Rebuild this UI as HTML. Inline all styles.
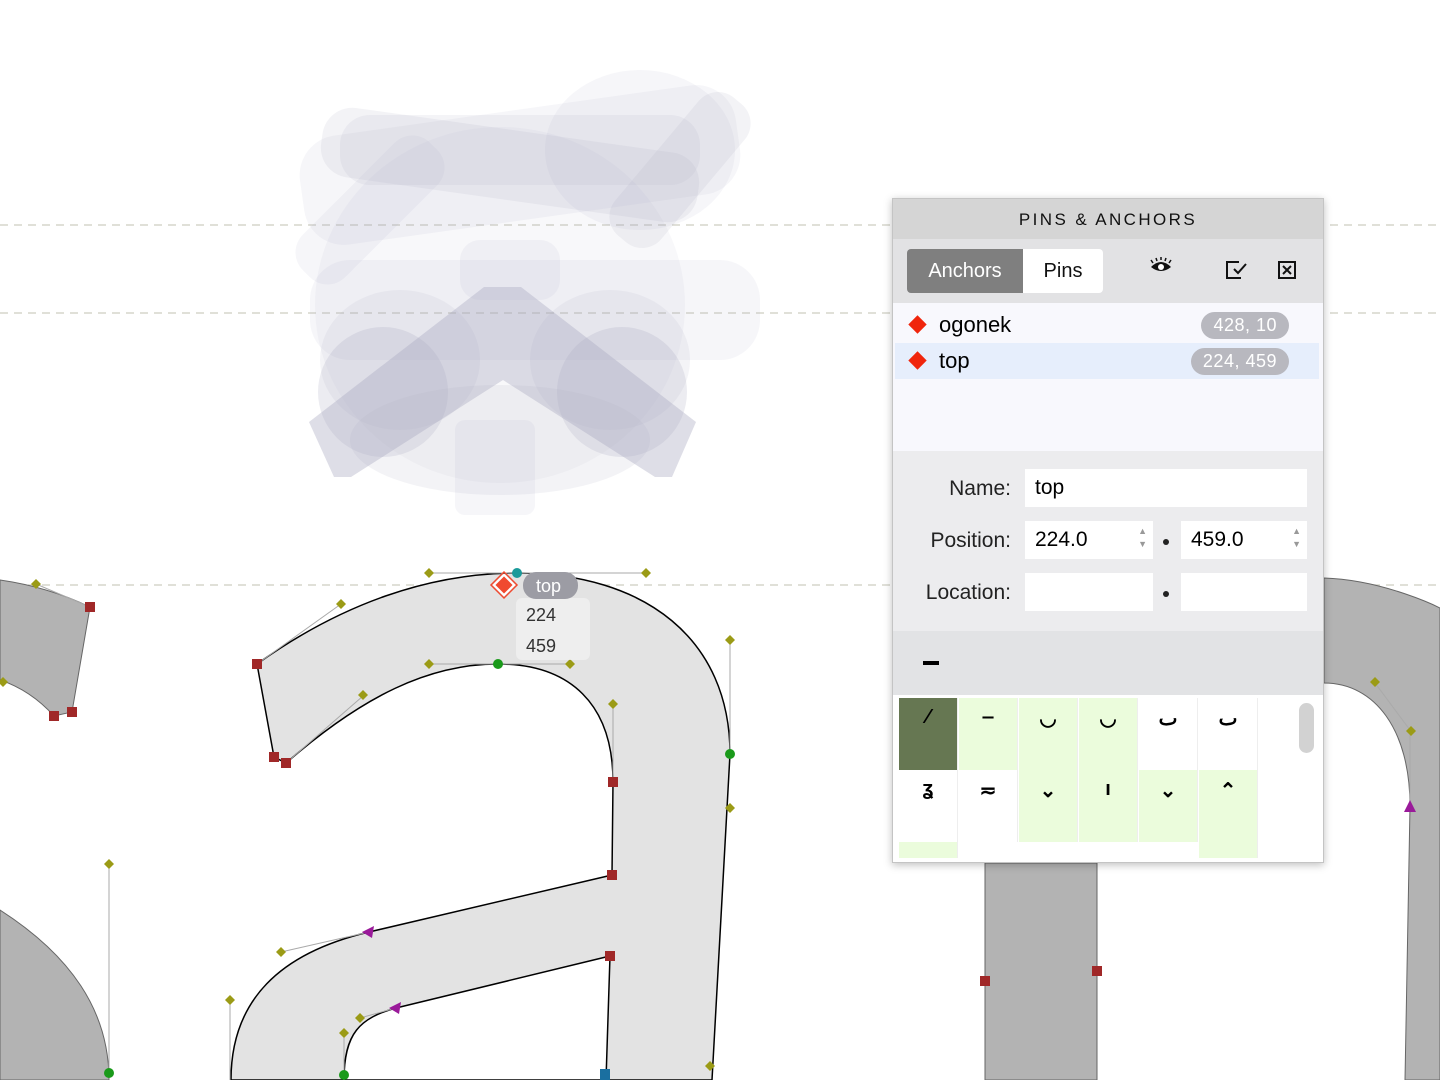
<!DOCTYPE html>
<html><head><meta charset="utf-8"><style>
*{margin:0;padding:0;box-sizing:border-box}
body{width:1440px;height:1080px;overflow:hidden;background:#fff;font-family:"Liberation Sans",sans-serif;position:relative}
svg.bg{position:absolute;left:0;top:0}
.panel{position:absolute;left:892px;top:198px;width:432px;height:665px;background:#fff;border:1px solid #c4c4c4;box-shadow:0 2px 8px rgba(0,0,0,.25);overflow:hidden}
.hdr{height:40px;background:#d5d5d5;text-align:center;line-height:42px;font-size:17px;letter-spacing:2.4px;color:#111}
.tabs{height:64px;background:#e2e2e4;position:relative}
.seg{position:absolute;left:14px;top:10px;height:44px;width:196px;border-radius:4px;overflow:hidden;display:flex;font-size:20px}
.seg div{line-height:44px;text-align:center}
.list{height:148px;background:#f8f8fd;position:relative}
.row{position:absolute;left:2px;width:424px;height:36px;font-size:22px;line-height:36px}
.dia{position:absolute;left:16px;top:11px;width:13px;height:13px;background:#f0250c;transform:rotate(45deg)}
.row .t{position:absolute;left:44px}
.pill{position:absolute;right:30px;top:5px;height:27px;line-height:27px;border-radius:14px;background:#b8b8bf;color:#fff;font-size:18px;padding:0 12px;letter-spacing:.5px}
.form{height:180px;background:#ececee;position:relative;font-size:21px}
.lbl{position:absolute;right:312px;color:#222}
.inp{position:absolute;background:#fff;height:38px;line-height:38px;padding-left:10px;font-size:21px}
.dot{position:absolute;left:270px;width:6px;height:6px;border-radius:3px;background:#222}
.bar{height:64px;background:#e2e3e5;position:relative}
.grid{position:absolute;left:6px;width:360px;height:160px;overflow:hidden}
.c{position:absolute;width:59px;height:72px;border-right:1px solid #eee;text-align:center;font-size:20px;font-weight:bold;padding-top:8px}
</style></head><body>
<svg class="bg" width="1440" height="1080">
<g stroke="#d6d6cc" stroke-dasharray="8,6" stroke-width="1.5">
<line x1="0" y1="225" x2="1440" y2="225"/><line x1="0" y1="313" x2="1440" y2="313"/><line x1="0" y1="585" x2="1440" y2="585"/>
</g>
<g fill="#a8a8c0">
<ellipse cx="500" cy="305" rx="185" ry="178" opacity=".08"/>
<ellipse cx="640" cy="150" rx="95" ry="80" opacity=".1"/>
<rect x="300" y="110" width="440" height="110" rx="40" opacity=".1" transform="rotate(-8 520 165)"/>
<rect x="320" y="130" width="380" height="70" rx="30" opacity=".14" transform="rotate(8 510 165)"/>
<rect x="340" y="115" width="360" height="70" rx="30" opacity=".12"/>
<rect x="590" y="140" width="180" height="60" rx="25" opacity=".14" transform="rotate(-50 680 170)"/>
<rect x="280" y="180" width="180" height="60" rx="25" opacity=".1" transform="rotate(-45 370 210)"/>
<rect x="310" y="260" width="450" height="100" rx="40" opacity=".1"/>
<ellipse cx="500" cy="440" rx="150" ry="55" opacity=".14"/>
<rect x="455" y="420" width="80" height="95" rx="10" opacity=".1"/>
<rect x="460" y="240" width="100" height="60" rx="20" opacity=".1"/>
<ellipse cx="383" cy="392" rx="65" ry="65" opacity=".22"/>
<ellipse cx="622" cy="392" rx="65" ry="65" opacity=".22"/>
<ellipse cx="400" cy="360" rx="80" ry="70" opacity=".12"/>
<ellipse cx="610" cy="360" rx="80" ry="70" opacity=".12"/>
<polygon points="334,477 309,422 484,287 521,287 696,422 672,477 655,477 503,380 351,477" opacity=".38"/>
</g>
<g fill="#b3b3b3" stroke="#666" stroke-width="1">
<path d="M0,580 C35,585 65,595 90,607 L72,712 L54,716 C35,695 15,685 0,680 Z"/>
<path d="M0,910 C70,955 109,1010 109,1080 L0,1080 Z"/>
</g>
<g fill="#b3b3b3" stroke="#666" stroke-width="1">
<path d="M985,863 L1097,863 L1097,1080 L985,1080 Z"/>
<path d="M1324,578 C1385,580 1440,608 1440,608 L1440,1080 L1405,1080 L1410,806 C1410,730 1375,683 1324,683 Z"/>
</g>
<path fill-rule="evenodd" fill="#e3e3e3" stroke="#000" stroke-width="1.5" d="M257,664 C341,604 429,573 517,573 C646,573 730,640 730,754 L712,1080 L231,1080 C231,1000 280,953 369,932 L612,875 L613,782 C613,704 570,664 498,664 C429,664 363,696 286,763 L274,757 Z M344,1080 C344,1033 360,1018 396,1008 L610,956 L606,1080 Z"/>
<g stroke="#aaa" stroke-width="1" fill="none">
<line x1="257" y1="664" x2="341" y2="604"/><line x1="429" y1="573" x2="646" y2="573"/><line x1="730" y1="640" x2="730" y2="754"/>
<line x1="429" y1="664" x2="570" y2="664"/><line x1="613" y1="704" x2="613" y2="782"/><line x1="286" y1="763" x2="363" y2="696"/>
<line x1="281" y1="952" x2="369" y2="932"/><line x1="230" y1="1000" x2="230" y2="1080"/><line x1="360" y1="1018" x2="396" y2="1008"/><line x1="344" y1="1033" x2="344" y2="1080"/>
<line x1="109" y1="864" x2="109" y2="1072"/><line x1="36" y1="584" x2="90" y2="607"/><line x1="1375" y1="683" x2="1410" y2="730"/><line x1="1410" y1="730" x2="1410" y2="806"/>
</g>
<g fill="#9b9b16">
<path d="M341,599l5,5-5,5-5-5z"/><path d="M429,568l5,5-5,5-5-5z"/><path d="M646,568l5,5-5,5-5-5z"/><path d="M730,635l5,5-5,5-5-5z"/><path d="M730,803l5,5-5,5-5-5z"/>
<path d="M429,659l5,5-5,5-5-5z"/><path d="M570,659l5,5-5,5-5-5z"/><path d="M613,699l5,5-5,5-5-5z"/><path d="M363,690l5,5-5,5-5-5z"/>
<path d="M281,947l5,5-5,5-5-5z"/><path d="M230,995l5,5-5,5-5-5z"/><path d="M360,1013l5,5-5,5-5-5z"/><path d="M344,1028l5,5-5,5-5-5z"/><path d="M710,1061l5,5-5,5-5-5z"/>
<path d="M109,859l5,5-5,5-5-5z"/><path d="M36,579l5,5-5,5-5-5z"/><path d="M3,677l5,5-5,5-5-5z"/><path d="M1375,677l5,5-5,5-5-5z"/><path d="M1411,726l5,5-5,5-5-5z"/>
</g>
<g fill="#a02828">
<rect x="252" y="659" width="10" height="10"/><rect x="269" y="752" width="10" height="10"/><rect x="281" y="758" width="10" height="10"/><rect x="608" y="777" width="10" height="10"/><rect x="607" y="870" width="10" height="10"/><rect x="605" y="951" width="10" height="10"/>
<rect x="85" y="602" width="10" height="10"/><rect x="67" y="707" width="10" height="10"/><rect x="49" y="711" width="10" height="10"/><rect x="980" y="976" width="10" height="10"/><rect x="1092" y="966" width="10" height="10"/>
</g>
<rect x="600" y="1069" width="10" height="11" fill="#1a6fa0"/>
<g fill="#1a9a1a"><circle cx="498" cy="664" r="5"/><circle cx="730" cy="754" r="5"/><circle cx="109" cy="1073" r="5"/><circle cx="344" cy="1075" r="5"/></g>
<circle cx="517" cy="573" r="5" fill="#1a9a9a"/>
<g fill="#9a1a9a"><path d="M362,932l12,-6,-2,12z"/><path d="M389,1008l12,-6,-2,12z"/><path d="M1410,800l6,12h-12z"/></g>
<path d="M504,575l10,10-10,10-10-10z" fill="#f04a30" stroke="#fff" stroke-width="2"/>
<path d="M504,572l13,13-13,13-13-13z" fill="none" stroke="#f04a30" stroke-width="1.5"/>
<rect x="516" y="598" width="74" height="62" rx="6" fill="#f0f0f0" opacity=".8"/>
<rect x="523" y="572" width="55" height="27" rx="13" fill="#9c9ca4"/>
<text x="536" y="592" font-size="18" fill="#fff" font-family="Liberation Sans">top</text>
<text x="526" y="621" font-size="18" fill="#333" font-family="Liberation Sans">224</text>
<text x="526" y="652" font-size="18" fill="#333" font-family="Liberation Sans">459</text>
</svg>
<div class="panel">
<div class="hdr">PINS &amp; ANCHORS</div>
<div class="tabs">
<div class="seg"><div style="width:116px;background:#7f7f7f;color:#fff">Anchors</div><div style="width:80px;background:#fff;color:#111">Pins</div></div>
<svg style="position:absolute;left:256px;top:18px" width="24" height="18"><path d="M2,10 Q12,0 22,10 Q12,18 2,10Z" fill="#111"/><circle cx="12" cy="10" r="3" fill="#fff"/><path d="M4,6l-2,-3M8,4l-1,-3M12,3v-3M16,4l1,-3M20,6l2,-3" stroke="#111" stroke-width="1.5"/></svg>
<svg style="position:absolute;left:332px;top:21px" width="24" height="20"><path d="M14,2H2V18H16" fill="none" stroke="#111" stroke-width="2"/><path d="M9,9l4,4 8,-9" fill="none" stroke="#111" stroke-width="2"/></svg>
<svg style="position:absolute;left:385px;top:22px" width="18" height="18"><rect x="1" y="1" width="16" height="16" fill="none" stroke="#111" stroke-width="2"/><path d="M5,5l8,8M13,5l-8,8" stroke="#111" stroke-width="2"/></svg>
</div>
<div class="list">
<div class="row" style="top:4px"><div class="dia"></div><span class="t">ogonek</span><span class="pill">428, 10</span></div>
<div class="row" style="top:40px;background:#e6eefc"><div class="dia"></div><span class="t">top</span><span class="pill">224, 459</span></div>
</div>
<div class="form">
<span class="lbl" style="top:26px">Name:</span><div class="inp" style="left:132px;top:18px;width:282px">top</div>
<span class="lbl" style="top:78px">Position:</span><div class="inp" style="left:132px;top:70px;width:128px">224.0<span style="position:absolute;right:6px;top:4px;font-size:9px;color:#999;line-height:13px">▲<br>▼</span></div>
<div class="dot" style="top:88px"></div><div class="inp" style="left:288px;top:70px;width:126px">459.0<span style="position:absolute;right:6px;top:4px;font-size:9px;color:#999;line-height:13px">▲<br>▼</span></div>
<span class="lbl" style="top:130px">Location:</span><div class="inp" style="left:132px;top:122px;width:128px"></div>
<div class="dot" style="top:140px"></div><div class="inp" style="left:288px;top:122px;width:126px"></div>
</div>
<div class="bar"><div style="position:absolute;left:30px;top:30px;width:16px;height:4px;background:#000"></div></div>
<div class="grid" style="top:499px;height:160px">
<div class="c" style="left:0;top:0;background:#667752;color:#000">⁄</div>
<div class="c" style="left:60px;top:0;background:#ebfcdc">‒</div>
<div class="c" style="left:120px;top:0;background:#ebfcdc">◡</div>
<div class="c" style="left:180px;top:0;background:#ebfcdc">◡</div>
<div class="c" style="left:240px;top:0;background:#fff">ٮ</div>
<div class="c" style="left:300px;top:0;background:#fff">ٮ</div>
<div class="c" style="left:0;top:72px;background:#fff">ʓ</div>
<div class="c" style="left:60px;top:72px;background:#fff">≂</div>
<div class="c" style="left:120px;top:72px;background:#ebfcdc">⌄</div>
<div class="c" style="left:180px;top:72px;background:#ebfcdc">ı</div>
<div class="c" style="left:240px;top:72px;background:#ebfcdc">⌄</div>
<div class="c" style="left:300px;top:72px;background:#ebfcdc">⌃</div>
<div class="c" style="left:0;top:144px;background:#ebfcdc"></div>
<div class="c" style="left:300px;top:144px;background:#ebfcdc"></div>
</div>
<div style="position:absolute;left:406px;top:504px;width:15px;height:50px;border-radius:8px;background:#d2d2d2"></div>
</div>
</body></html>
